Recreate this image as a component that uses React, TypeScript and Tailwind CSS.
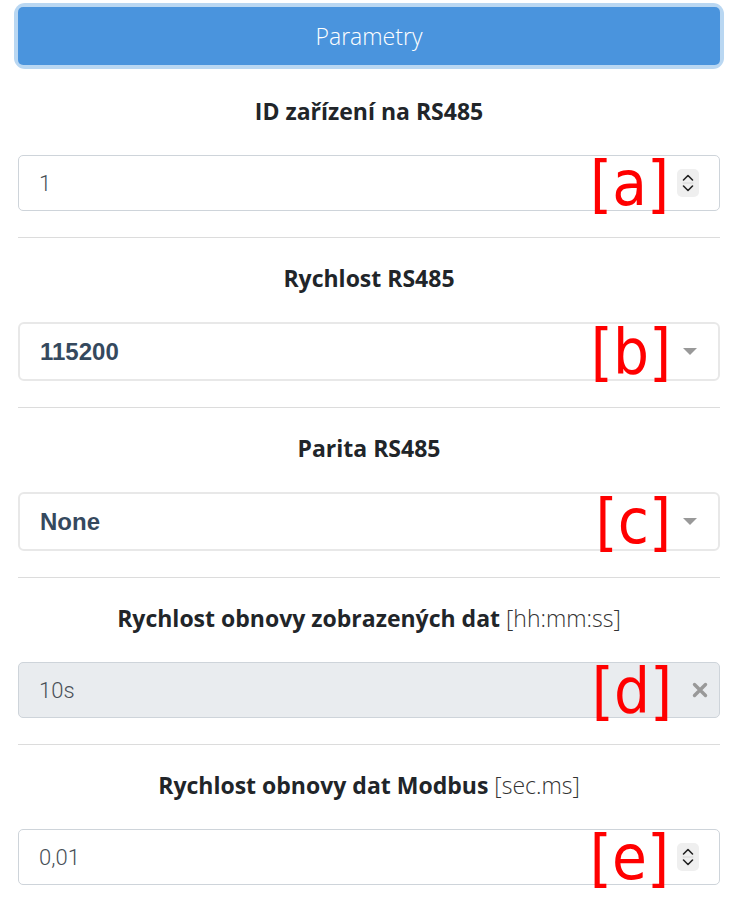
import React from "react"

const labelFont = { fontFamily: "'Open Sans', Lato, sans-serif" }
const valueFont = { fontFamily: "Roboto, 'Liberation Sans', sans-serif" }
const selectFont = { fontFamily: "'Liberation Sans', Arial, sans-serif" }

function Note({ ch }: { ch: string }) {
  return (
    <span
      className="flex h-[59px] items-center text-[63px] leading-none text-[#ff0000]"
      style={{ fontFamily: "'DejaVu Sans Condensed', 'DejaVu Sans', sans-serif", fontStretch: "condensed" }}
    >
      [{ch}]
    </span>
  )
}

function Spinner() {
  return (
    <div className="ml-[8px] flex h-[28px] w-[22px] items-center justify-center rounded-[5px] bg-[#efefef]">
      <svg width="14" height="22" viewBox="0 0 14 22" fill="none" stroke="#222" strokeWidth="1.6" strokeLinecap="round" strokeLinejoin="round">
        <path d="M2.5 8 L7 3.5 L11.5 8" />
        <path d="M2 11 H12" stroke="#d6d6d6" strokeWidth="1" />
        <path d="M2.5 14 L7 18.5 L11.5 14" />
      </svg>
    </div>
  )
}

function Caret() {
  return (
    <svg className="ml-[12px]" width="14" height="7" viewBox="0 0 14 7">
      <path d="M0 0 H14 L7 7 Z" fill="#999" />
    </svg>
  )
}

function Clear() {
  return (
    <svg className="ml-[20px]" width="16" height="16" viewBox="0 0 16 16" stroke="#999" strokeWidth="3.4" strokeLinecap="round">
      <path d="M2.5 2.5 L13.5 13.5 M13.5 2.5 L2.5 13.5" />
    </svg>
  )
}

function Label({ main, unit, first }: { main: string; unit?: string; first?: boolean }) {
  return (
    <div
      className={`${first ? "pt-[32px]" : "pt-[26px]"} pb-[30px] text-center text-[23px] leading-[28px] text-[#212529]`}
      style={labelFont}
    >
      <span className="font-bold">{main}</span>
      {unit && <span className="font-light text-[#333]"> {unit}</span>}
    </div>
  )
}

function NumberInput({ value, note }: { value: string; note: string }) {
  return (
    <div className="flex h-[56px] items-center rounded-[5px] border border-[#ced4da] bg-white pl-[20px] pr-[20px]">
      <span className="flex-1 text-[22px] font-light text-[#495057]" style={valueFont}>{value}</span>
      <Note ch={note} />
      <Spinner />
    </div>
  )
}

function SelectBox({ value, note }: { value: string; note: string }) {
  return (
    <div className="flex h-[59px] items-center rounded-[6px] border-2 border-[#e8e8e8] bg-white pl-[20px] pr-[21px]">
      <span className="flex-1 text-[24px] font-bold text-[#35495e]" style={selectFont}>{value}</span>
      <Note ch={note} />
      <Caret />
    </div>
  )
}

function DisabledInput({ value, note }: { value: string; note: string }) {
  return (
    <div className="flex h-[56px] items-center rounded-[5px] border border-[#ced4da] bg-[#e9ecef] pl-[20px] pr-[11px]">
      <span className="flex-1 text-[22px] font-light text-[#495057]" style={valueFont}>{value}</span>
      <Note ch={note} />
      <Clear />
    </div>
  )
}

function Divider() {
  return <div className="mt-[26px] h-px bg-[#dcdcdc]" />
}

export default function App() {
  return (
    <div className="min-h-[900px] bg-white pl-[18px] pr-[14px] pt-[7px]">
      <div className="rounded-[7px] shadow-[0_0_0_4px_#b9d7f2]">
        <button
          className="flex h-[58px] w-full items-center justify-center rounded-[5px] bg-[#4a94dd] text-[23px] font-light text-white"
          style={labelFont}
        >
          Parametry
        </button>
      </div>

      <Label main="ID zařízení na RS485" first />
      <NumberInput value="1" note="a" />
      <Divider />

      <Label main="Rychlost RS485" />
      <SelectBox value="115200" note="b" />
      <Divider />

      <Label main="Parita RS485" />
      <SelectBox value="None" note="c" />
      <Divider />

      <Label main="Rychlost obnovy zobrazených dat" unit="[hh:mm:ss]" />
      <DisabledInput value="10s" note="d" />
      <Divider />

      <Label main="Rychlost obnovy dat Modbus" unit="[sec.ms]" />
      <NumberInput value="0,01" note="e" />
    </div>
  )
}
